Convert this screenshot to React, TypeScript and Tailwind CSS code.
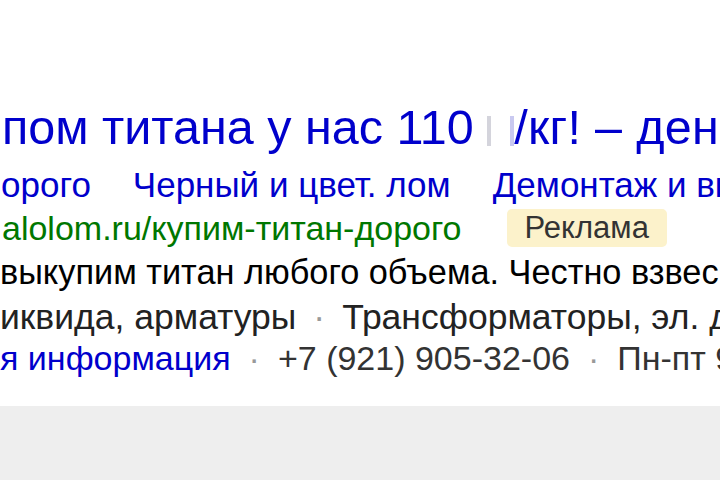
export default function App() {
  return (
    <div className="w-[720px] h-[480px] bg-[#eeeeee] overflow-hidden font-['Liberation_Sans',Arial,sans-serif]">
      <div className="h-[406px] bg-white pt-[97px] overflow-hidden">
        {/* Заголовок объявления */}
        <div className="h-[66px] whitespace-nowrap text-[48.5px] leading-[60px] text-[#0000cc]">
          <span className="ml-[2px]">пом титана у нас 110 </span>
          <span className="inline-block w-[4px] h-[30px] bg-[#d4d4dc] align-[-2px]" />
          <span className="inline-block w-[4px] h-[30px] bg-[#c9c9f0] align-[-2px] ml-[19px]" />
          <span className="tracking-[0.3px]">/кг! – деньги сразу</span>
        </div>

        {/* Быстрые ссылки */}
        <div className="h-[43px] whitespace-nowrap text-[35px] leading-[44px] text-[#0000cc] flex gap-[42px]">
          <span className="ml-[1px]">орого</span>
          <span>Черный и цвет. лом</span>
          <span>Демонтаж и вывоз</span>
        </div>

        {/* Адрес */}
        <div className="h-[44px] whitespace-nowrap text-[34px] leading-[44px] flex items-center">
          <span className="ml-[2px] text-[#007700]">alolom.ru/купим-титан-дорого</span>
          <span className="ml-[45px] h-[38px] px-[18px] rounded-[5px] bg-[#fcf2cb] text-[#333333] text-[31px] leading-[38px]">
            Реклама
          </span>
        </div>

        {/* Текст */}
        <div className="h-[45px] whitespace-nowrap text-[34.3px] leading-[44px] text-black">
          выкупим титан любого объема. Честно взвесим
        </div>
        <div className="h-[41px] whitespace-nowrap text-[35.5px] leading-[44px] text-[#222222]">
          иквида, арматуры
          <span className="text-[#999999] mx-[17px]">·</span>
          Трансформаторы, эл. двигатели
        </div>
        <div className="h-[44px] whitespace-nowrap text-[34px] leading-[44px] text-[#333333]">
          <span className="text-[#0000cc]">я информация</span>
          <span className="text-[#999999] mx-[18px]">·</span>
          +7 (921) 905-32-06
          <span className="text-[#999999] mx-[18px]">·</span>
          Пн-пт 9:00-18:00
        </div>
      </div>
    </div>
  );
}
